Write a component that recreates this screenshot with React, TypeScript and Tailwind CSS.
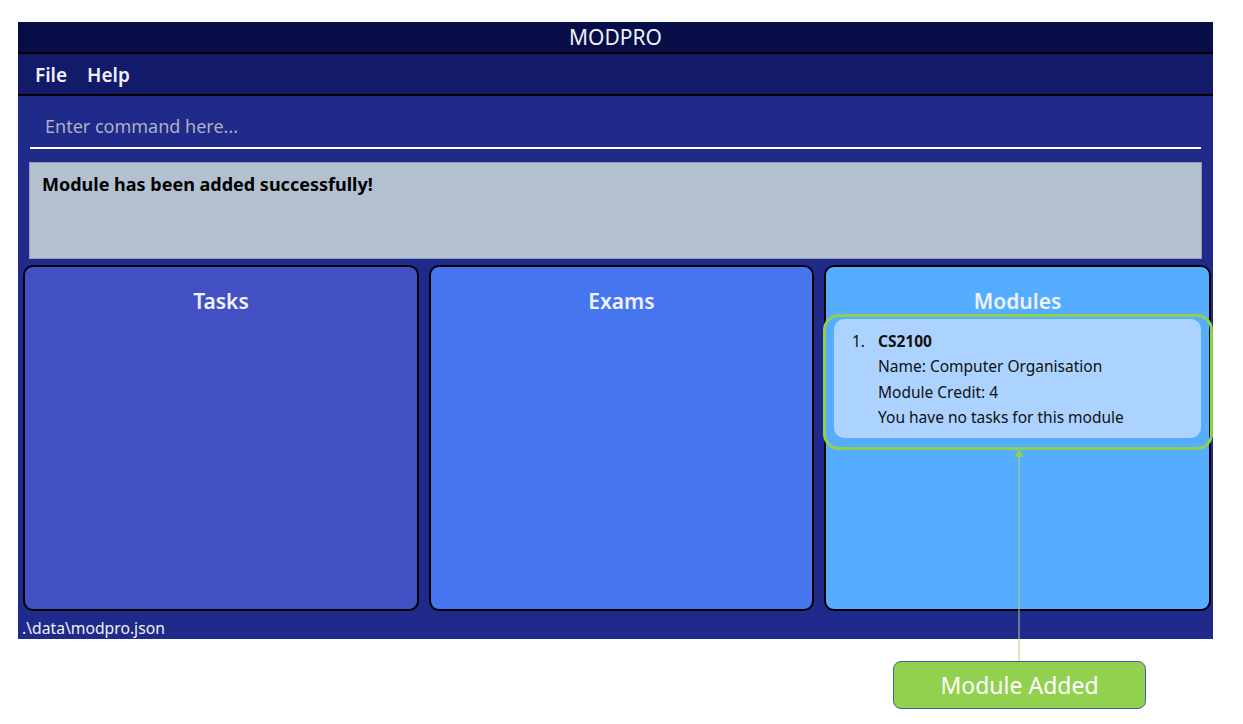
import React from "react";

const font = { fontFamily: '"Noto Sans", "Open Sans", sans-serif' };

const Panel = ({ title, bg, children }: { title: string; bg: string; children?: React.ReactNode }) => {
  return (
    <div className={`relative flex flex-col border-2 border-black rounded-[10px] ${bg}`}>
      <h2 className="text-center text-[21px] font-semibold text-[#eef2fb] mt-[21px] leading-[26px]">{title}</h2>
      {children}
    </div>
  );
};

export default function App() {
  return (
    <div className="w-[1243px] h-[724px] bg-white relative" style={font}>
      <div className="pt-[22px] pl-[18px]">
        <div className="w-[1195px] h-[617px] flex flex-col bg-[#1f2a8a]">
          {/* title bar */}
          <div className="h-[32px] bg-[#070d47] flex items-center justify-center text-[#eef0f8] text-[21px] leading-none border-b-2 border-black">
            MODPRO
          </div>
          {/* menu */}
          <div className="h-[42px] bg-[#131a6a] border-b-2 border-black flex items-center gap-[20px] pl-[17px] pt-[3px] text-[19px] font-semibold text-[#eef0f8]">
            <span>File</span>
            <span>Help</span>
          </div>
          {/* command box */}
          <div className="px-[12px] pt-[17px]">
            <div className="h-[36px] border-b-2 border-white pl-[15px] text-[18px] text-[#aeb0c4] leading-[26px]">
              Enter command here...
            </div>
          </div>
          {/* result */}
          <div className="mx-[11px] mt-[13px] h-[97px] bg-[#b3c0d0] border border-[#8e9cb8] px-[12px] pt-[10px] text-[18px] font-bold text-black leading-[22px]">
            Module has been added successfully!
          </div>
          {/* panels */}
          <div className="flex-1 grid grid-cols-[396px_385px_387px] gap-[10px] px-[5px] pt-[6px]">
            <Panel title="Tasks" bg="bg-[#4350c3]" />
            <Panel title="Exams" bg="bg-[#4575ef]" />
            <Panel title="Modules" bg="bg-[#56acff]">
              <div className="relative mt-[5px] mx-[8px] rounded-[10px] bg-[#acd2ff] px-[18px] pt-[10px] pb-[7px] text-[15.5px] text-[#111] leading-[25.4px]">
                <div className="flex">
                  <span className="w-[26px]">1.</span>
                  <div>
                    <div className="font-bold">CS2100</div>
                    <div>Name: Computer Organisation</div>
                    <div>Module Credit: 4</div>
                    <div>You have no tasks for this module</div>
                  </div>
                </div>
                <div className="absolute -left-[11px] -right-[12px] -top-[5px] -bottom-[12px] border-[3px] border-[#8fd14f] rounded-[16px]" />
              </div>
            </Panel>
          </div>
          <div className="h-[28px] pl-[4px] pt-[7px] text-[15.7px] text-[#eef0f8] leading-[20px]">.\data\modpro.json</div>
        </div>
      </div>
      {/* annotation arrow */}
      <svg className="absolute left-[1013px] top-[448px]" width="12" height="214" viewBox="0 0 12 214">
        <line x1="6" y1="8" x2="6" y2="214" stroke="#a9d18e" strokeWidth="1" />
        <polygon points="6,1 1.5,9 10.5,9" fill="#8fd14f" />
      </svg>
      <div className="absolute left-[893px] top-[661px] w-[253px] h-[48px] rounded-[8px] bg-[#92d050] border border-[#41609c] flex items-center justify-center text-white text-[23px]">
        Module Added
      </div>
    </div>
  );
}
